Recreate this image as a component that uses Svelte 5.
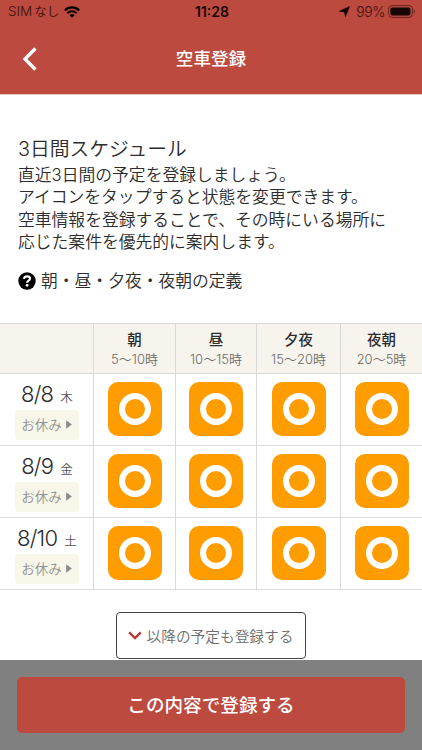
<script>
	const slots = [
		{ name: '朝', hours: '5〜10時' },
		{ name: '昼', hours: '10〜15時' },
		{ name: '夕夜', hours: '15〜20時' },
		{ name: '夜朝', hours: '20〜5時' }
	];

	let days = [
		{ date: '8/8', weekday: '木', open: [true, true, true, true] },
		{ date: '8/9', weekday: '金', open: [true, true, true, true] },
		{ date: '8/10', weekday: '土', open: [true, true, true, true] }
	];

	function toggle(day, slot) {
		days[day].open[slot] = !days[day].open[slot];
	}

	function rest(day) {
		days[day].open = slots.map(() => false);
	}
</script>

<div class="screen">
	<header>
		<div class="status">
			<div class="carrier">
				<span>SIM<span class="kana">なし</span></span>
				<svg class="wifi" width="16" height="12" viewBox="0 0 16 12" fill="none" stroke="currentColor" stroke-width="2.1">
					<path d="M0.8 4.4a10.2 10.2 0 0 1 14.4 0" />
					<path d="M3.4 7.2a6.5 6.5 0 0 1 9.2 0" />
					<path d="M8 11.8L5.5 9.3a3.5 3.5 0 0 1 5 0z" fill="currentColor" stroke="none" />
				</svg>
			</div>
			<div class="time">11:28</div>
			<div class="power">
				<svg width="11" height="11" viewBox="0 0 11 11"><path d="M10.6 0.4L6.5 10.6 5.4 5.9 0.4 5.2z" fill="currentColor" stroke="currentColor" stroke-width="0.6" /></svg>
				<span>99%</span>
				<svg class="battery" width="28" height="13" viewBox="0 0 28 13">
					<rect x="0.6" y="0.6" width="23.8" height="11.8" rx="3.4" fill="none" stroke="currentColor" stroke-opacity="0.5" />
					<rect x="2.4" y="2.4" width="20" height="8.2" rx="1.8" fill="currentColor" />
					<path d="M25.8 4.4c1.6 0.7 1.6 3.5 0 4.2z" fill="currentColor" fill-opacity="0.5" />
				</svg>
			</div>
		</div>
		<div class="nav">
			<button class="back" aria-label="戻る">
				<svg width="16" height="24" viewBox="0 0 16 24"><path d="M13.4 1.5L3 12l10.4 10.5" fill="none" stroke="#fff" stroke-width="3.4" /></svg>
			</button>
			<h1>空車登録</h1>
		</div>
	</header>

	<section class="intro">
		<h2>3日間スケジュール</h2>
		<p>
			直近3日間の予定を登録しましょう。<br />
			アイコンをタップすると状態を変更できます。<br />
			空車情報を登録することで、その時にいる場所に<br />
			応じた案件を優先的に案内します。
		</p>
		<div class="help">
			<svg width="18" height="18" viewBox="0 0 18 18">
				<circle cx="9" cy="9" r="8.7" fill="#000" />
				<path d="M5.9 6.9C6.2 5.1 7.5 4.4 9 4.4c1.7 0 3 0.9 3 2.4 0 2-2.9 1.9-2.9 4" fill="none" stroke="#fff" stroke-width="2.1" />
				<circle cx="9.1" cy="13.3" r="1.4" fill="#fff" />
			</svg>
			<span>朝・昼・夕夜・夜朝の定義</span>
		</div>
	</section>

	<div class="grid">
		<div class="head"></div>
		{#each slots as slot}
			<div class="head">
				<b>{slot.name}</b>
				<span>{slot.hours}</span>
			</div>
		{/each}
		{#each days as day, d}
			<div class="day">
				<div class="date">{day.date}<small>{day.weekday}</small></div>
				<button class="rest" on:click={() => rest(d)}>
					お休み
					<svg width="6" height="9" viewBox="0 0 6 9"><path d="M0.2 0.2L5.8 4.5 0.2 8.8z" fill="#8c8c8a" /></svg>
				</button>
			</div>
			{#each day.open as open, s}
				<div class="cell">
					<button class="tile" class:off={!open} aria-label="{day.date} {slots[s].name}" on:click={() => toggle(d, s)}>
						{#if open}<i class="ring"></i>{/if}
					</button>
				</div>
			{/each}
		{/each}
	</div>

	<button class="more">
		<svg width="14" height="9" viewBox="0 0 14 9"><path d="M1.2 1.4L7 7.1l5.8-5.7" fill="none" stroke="#b83a32" stroke-width="2.3" /></svg>
		以降の予定も登録する
	</button>

	<footer>
		<button class="submit">この内容で登録する</button>
	</footer>
</div>

<style>
	:global(body) {
		background: #fff;
	}

	.screen {
		display: flex;
		flex-direction: column;
		width: 422px;
		height: 750px;
		overflow: hidden;
		background: #fff;
		color: #2c2c2c;
		font-family: Inter, 'Noto Sans CJK JP', sans-serif;
		font-weight: 350;
	}

	button {
		border: 0;
		padding: 0;
		background: none;
		font-family: inherit;
		font-weight: inherit;
		color: inherit;
		cursor: pointer;
	}

	svg {
		display: block;
		flex: none;
	}

	header {
		flex: none;
		height: 94px;
		background: #bc4a3f;
		border-bottom: 1px solid #e9c8c4;
	}

	.status {
		display: grid;
		grid-template-columns: 1fr auto 1fr;
		align-items: center;
		height: 23px;
		padding: 0 6px 0 8px;
		color: #160504;
		font-size: 13.5px;
		line-height: 23px;
	}

	.carrier,
	.power {
		display: flex;
		align-items: center;
	}

	.carrier {
		gap: 5px;
		color: #3a100c;
	}

	.carrier .kana {
		margin-left: 2px;
		font-size: 12.5px;
	}

	.wifi {
		color: #000;
	}

	.time {
		font-size: 14px;
		font-weight: 600;
	}

	.power {
		justify-content: flex-end;
		gap: 6px;
	}

	.power span {
		color: #3a100c;
		font-size: 14px;
		letter-spacing: -0.4px;
	}

	.battery {
		margin-left: -3px;
	}

	.nav {
		display: grid;
		grid-template-columns: 60px 1fr 60px;
		align-items: center;
		height: 72px;
	}

	.back {
		padding-left: 22px;
	}

	h1 {
		margin: 0;
		color: #fff;
		font-size: 17.6px;
		font-weight: 500;
		line-height: 24px;
		text-align: center;
	}

	.intro {
		flex: none;
		height: 228px;
		box-sizing: border-box;
		padding: 41px 18px 0;
	}

	h2 {
		margin: 0;
		font-size: 19.8px;
		font-weight: 350;
		line-height: 27px;
	}

	p {
		margin: 0;
		padding-top: 1px;
		font-size: 16.8px;
		line-height: 22.4px;
		white-space: nowrap;
	}

	.help {
		display: flex;
		align-items: center;
		gap: 5px;
		margin-top: 15px;
		font-size: 16.8px;
		line-height: 24px;
	}

	.grid {
		flex: none;
		display: grid;
		grid-template-columns: 94px 82px 81px 84px 81px;
		grid-template-rows: 50px 72px 72px 72px;
		border-top: 1px solid #d9d9d9;
	}

	.grid > div {
		display: flex;
		flex-direction: column;
		align-items: center;
		box-sizing: border-box;
		border-right: 1px solid #d9d9d9;
		border-bottom: 1px solid #d9d9d9;
	}

	.grid > div:nth-child(5n) {
		border-right: 0;
	}

	.head {
		padding-top: 6px;
		background: #f7f4ed;
	}

	.head b {
		font-size: 14.5px;
		font-weight: 500;
		line-height: 19px;
	}

	.head span {
		color: #6c6c6c;
		font-size: 13px;
		line-height: 20px;
	}

	.grid > .day {
		padding-top: 7px;
	}

	.date {
		height: 27px;
		font-size: 22px;
		line-height: 27px;
		letter-spacing: -0.8px;
	}

	.date small {
		margin-left: 7px;
		color: #555;
		font-size: 12.5px;
		line-height: 1;
	}

	.rest {
		display: flex;
		align-items: center;
		justify-content: center;
		gap: 4px;
		box-sizing: border-box;
		width: 64px;
		height: 30px;
		margin-top: 2px;
		padding-bottom: 2px;
		border-radius: 4px;
		background: #f8f6e9;
		color: #929292;
		font-size: 13.5px;
	}

	.grid > .cell {
		padding-top: 8px;
	}

	.tile {
		display: flex;
		align-items: center;
		justify-content: center;
		width: 54px;
		height: 54px;
		border-radius: 10px;
		background: #ff9c00;
	}

	.tile.off {
		background: #ccc;
	}

	.ring {
		box-sizing: border-box;
		width: 32px;
		height: 32px;
		border: 6px solid #fff;
		border-radius: 50%;
	}

	.more {
		flex: none;
		align-self: center;
		display: flex;
		align-items: center;
		justify-content: center;
		gap: 5px;
		box-sizing: border-box;
		width: 190px;
		height: 47px;
		margin-top: 22px;
		padding-right: 1px;
		border: 1px solid #444;
		border-radius: 4px;
		background: #fff;
		color: #6c6c6c;
		font-size: 14.7px;
	}

	footer {
		flex: none;
		height: 90px;
		margin-top: 1px;
		padding: 17px 17px 0;
		background: #808080;
	}

	.submit {
		display: block;
		width: 100%;
		height: 56px;
		padding-bottom: 3px;
		border-radius: 5px;
		background: #bc4a3f;
		color: #fff;
		font-size: 18.6px;
		font-weight: 500;
	}
</style>
